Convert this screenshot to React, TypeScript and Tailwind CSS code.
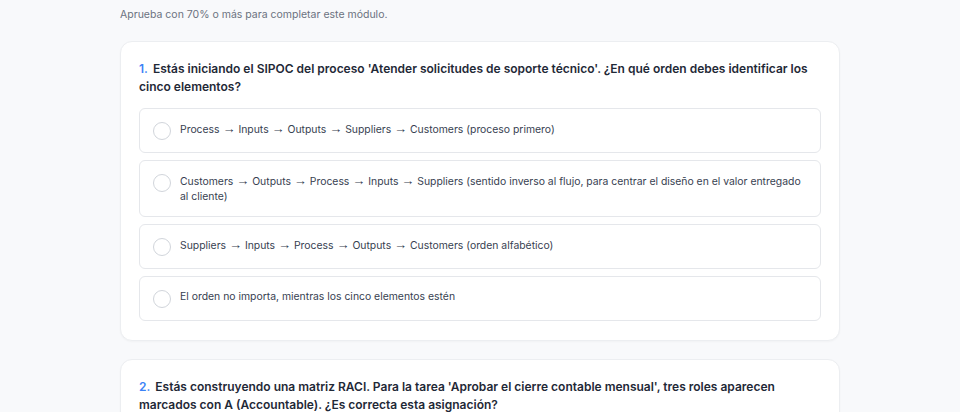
import React from "react";

const questions = [
  {
    n: "1.",
    text: "Estás iniciando el SIPOC del proceso 'Atender solicitudes de soporte técnico'. ¿En qué orden debes identificar los cinco elementos?",
    options: [
      "Process → Inputs → Outputs → Suppliers → Customers (proceso primero)",
      "Customers → Outputs → Process → Inputs → Suppliers (sentido inverso al flujo, para centrar el diseño en el valor entregado al cliente)",
      "Suppliers → Inputs → Process → Outputs → Customers (orden alfabético)",
      "El orden no importa, mientras los cinco elementos estén",
    ],
  },
  {
    n: "2.",
    text: "Estás construyendo una matriz RACI. Para la tarea 'Aprobar el cierre contable mensual', tres roles aparecen marcados con A (Accountable). ¿Es correcta esta asignación?",
    options: [
      "Sí, varios roles pueden ser Accountable si comparten la responsabilidad",
      "No, solo debe haber un único Accountable por tarea",
      "Sí, siempre que haya al menos un Responsible",
      "No, la aprobación nunca se asigna en una RACI",
    ],
  },
];

function OptionText({ text }: { text: string }) {
  const parts = text.split("→");
  return (
    <>
      {parts.map((p, i) => (
        <React.Fragment key={i}>
          {i > 0 && (
            <span
              className="text-[13px] leading-none"
              style={{ fontFamily: "'Noto Sans', sans-serif" }}
            >
              →
            </span>
          )}
          {p}
        </React.Fragment>
      ))}
    </>
  );
}

export default function App() {
  return (
    <div
      className="min-h-screen bg-[#f8f9fb] text-[#1f2937]"
      style={{ fontFamily: "Inter, 'Noto Sans', sans-serif" }}
    >
      <div className="mx-auto w-[720px] pt-[7px] pb-10">
        <p className="text-[10.5px] leading-4 text-[#6b7280]">
          Aprueba con 70% o más para completar este módulo.
        </p>
        <div className="mt-[18px] flex flex-col gap-[18px]">
          {questions.map((q) => (
            <div
              key={q.n}
              className="rounded-xl border border-[#eceef1] bg-white px-[18px] pt-[18px] pb-[19px] shadow-[0_1px_2px_rgba(0,0,0,0.03)]"
            >
              <p className="text-[12px] font-semibold leading-[18px] text-[#1f2937]">
                <span className="text-[#3b82f6]">{q.n}</span>
                <span className="ml-[5px]">{q.text}</span>
              </p>
              <div className="mt-3 flex flex-col gap-[7px]">
                {q.options.map((o) => (
                  <div
                    key={o}
                    className="flex items-start gap-[9px] rounded-md border border-[#e5e7eb] bg-white px-[13px] py-3"
                  >
                    <div className="mt-px h-[18px] w-[18px] shrink-0 rounded-full border-[1.5px] border-[#d1d5db] bg-white" />
                    <span className="pt-px text-[10.4px] leading-[14.5px] text-[#374151]">
                      <OptionText text={o} />
                    </span>
                  </div>
                ))}
              </div>
            </div>
          ))}
        </div>
      </div>
    </div>
  );
}
